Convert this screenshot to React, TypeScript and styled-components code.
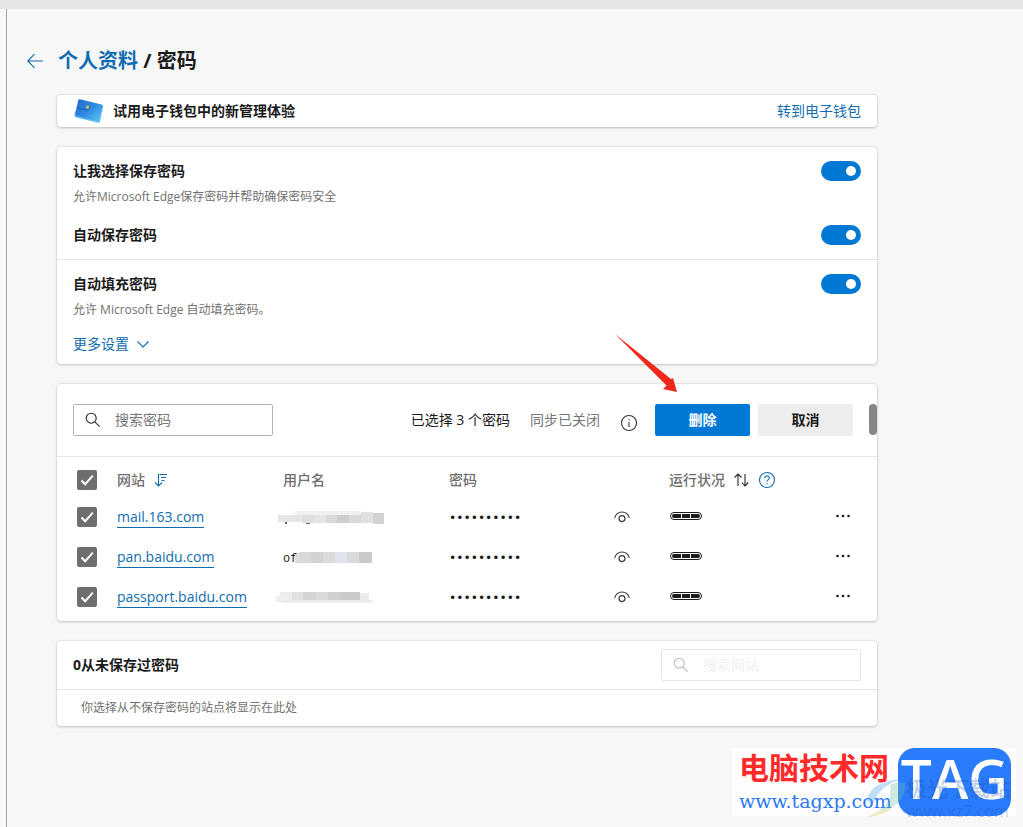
import React from 'react';
import styled, { createGlobalStyle } from 'styled-components';

const GlobalStyle = createGlobalStyle`
  * { box-sizing: border-box; }
  body {
    margin: 0;
    background: #f7f7f7;
    color: #1b1b1b;
    font-family: 'Open Sans', 'Noto Sans CJK SC', sans-serif;
    font-size: 14px;
    line-height: 20px;
  }
  button, input { font: inherit; color: inherit; }
  button { border: 0; padding: 0; background: none; }
  svg { display: block; flex: none; }
`;

const Page = styled.div`
  position: relative;
  display: flex;
  flex-direction: column;
  min-height: 100vh;
  overflow: hidden;
`;

const TopStrip = styled.div`
  height: 9px;
  background: #e5e5e5;
`;

const Main = styled.main`
  flex: 1;
  margin-left: 6px;
  padding: 38px 20px 38px;
  border-left: 1px solid #a6a6a6;
`;

const Header = styled.header`
  display: flex;
  align-items: center;
  gap: 14px;
  margin-bottom: 20px;
`;

const Title = styled.h1`
  margin: 0;
  font-size: 20px;
  line-height: 28px;
  font-weight: 700;
`;

const Link = styled.a`
  color: #0f6cb0;
  text-decoration: none;
`;

const Cards = styled.div`
  display: flex;
  flex-direction: column;
  gap: 20px;
  max-width: 850px;
  padding-left: 30px;
`;

const Card = styled.section`
  position: relative;
  background: #fff;
  border-radius: 4px;
  box-shadow: 0 0 2px rgba(0, 0, 0, 0.18), 0 1px 3px rgba(0, 0, 0, 0.18);
`;

const Banner = styled.div`
  display: flex;
  align-items: center;
  gap: 8px;
  height: 32px;
  padding: 0 16px;
`;

const Strong = styled.h2`
  flex: 1;
  margin: 0;
  font-size: 14px;
  line-height: 20px;
  font-weight: 700;
`;

const SettingGroup = styled.div<{ $divided?: boolean; $end: number }>`
  padding: 14px 16px ${(p) => p.$end}px;
  border-top: ${(p) => (p.$divided ? '1px solid #e5e5e5' : '0')};
`;

const SettingRow = styled.label`
  display: flex;
  align-items: center;
  font-weight: 700;

  & > span { flex: 1; }
`;

const Note = styled.p`
  margin: 6px 0 0;
  font-size: 12px;
  line-height: 20px;
  color: #717171;
`;

const Toggle = styled.input`
  appearance: none;
  display: flex;
  align-items: center;
  justify-content: flex-end;
  width: 40px;
  height: 20px;
  margin: 0;
  padding: 0 5px;
  border-radius: 10px;
  background: #0078d4;

  &::before {
    content: '';
    width: 10px;
    height: 10px;
    border-radius: 50%;
    background: #fff;
  }
`;

const MoreButton = styled.button`
  display: flex;
  align-items: center;
  gap: 8px;
  margin-top: 14px;
  color: #0f6cb0;
`;

const SecondSetting = styled.div`
  padding-top: 18px;
`;

const Toolbar = styled.div`
  display: flex;
  align-items: center;
  height: 73px;
  padding: 0 24px 0 16px;
  border-bottom: 1px solid #e5e5e5;
`;

const SearchBox = styled.label<{ $muted?: boolean }>`
  display: flex;
  align-items: center;
  gap: 14px;
  width: 200px;
  height: 32px;
  padding: 0 11px;
  border: 1px solid ${(p) => (p.$muted ? '#e5e5e5' : '#b3b3b3')};
  border-radius: 2px;
  color: ${(p) => (p.$muted ? '#b8b8b8' : '#2b2b2b')};

  input {
    flex: 1;
    min-width: 0;
    padding: 0;
    border: 0;
    outline: 0;
    background: none;
  }
  input::placeholder {
    color: ${(p) => (p.$muted ? '#f0f0f0' : '#767676')};
    opacity: 1;
  }
`;

const Status = styled.div`
  display: flex;
  align-items: center;
  gap: 20px;
  margin: 0 17px 0 auto;
`;

const Muted = styled.span`
  color: #767676;
`;

const InfoButton = styled.button`
  padding-top: 6px;
`;

const ActionButton = styled.button<{ $primary?: boolean }>`
  width: 95px;
  height: 32px;
  margin-left: ${(p) => (p.$primary ? 0 : 8)}px;
  border-radius: 2px;
  font-weight: 700;
  background: ${(p) => (p.$primary ? '#0078d4' : '#ededed')};
  color: ${(p) => (p.$primary ? '#fff' : '#1b1b1b')};
`;

const ScrollThumb = styled.div`
  position: absolute;
  top: 20px;
  right: 0;
  width: 8px;
  height: 31px;
  border-radius: 4px;
  background: #868686;
`;

const TableWrap = styled.div`
  padding-bottom: 4px;
`;

const Table = styled.table`
  width: 100%;
  table-layout: fixed;
  border-collapse: collapse;

  th, td {
    height: 40px;
    padding: 0;
    text-align: left;
    vertical-align: middle;
  }
  th {
    padding-top: 6px;
    font-weight: 500;
    color: #6e6e6e;
  }
  td:nth-child(n + 6) { padding-bottom: 2px; }
`;

const HeadLabel = styled.span`
  display: flex;
  align-items: center;
  gap: 9px;
`;

const CheckLabel = styled.label`
  display: grid;
  width: 20px;
  height: 20px;
  margin-left: 20px;

  & > * { grid-area: 1 / 1; }
  input {
    appearance: none;
    width: 20px;
    height: 20px;
    margin: 0;
    border-radius: 2px;
    background: #6e6e6e;
  }
  svg { z-index: 1; pointer-events: none; }
`;

const SiteLink = styled.a`
  display: inline-block;
  border-bottom: 1px solid #0f6cb0;
  color: #0f6cb0;
  text-decoration: none;
`;

const UserCell = styled.div`
  display: flex;
  align-items: center;
  height: 20px;
  font-family: 'Liberation Mono', monospace;
  font-size: 12px;

  span { padding-top: 4px; }
`;

const Mosaic = styled.svg`
  margin-left: -10px;
`;

const Dots = styled.span`
  font-family: 'DejaVu Sans Mono', monospace;
  font-size: 12px;
`;

const IconButton = styled.button<{ $indent: number }>`
  display: block;
  margin-left: ${(p) => p.$indent}px;
`;

const BlockedHead = styled.div`
  display: flex;
  align-items: center;
  height: 49px;
  padding: 0 16px;
  border-bottom: 1px solid #e5e5e5;
`;

const BlockedNote = styled.p`
  margin: 0;
  padding: 9px 24px;
  font-size: 12px;
  line-height: 18px;
  color: #717171;
`;

const ArrowMark = styled.svg`
  position: absolute;
  left: 614px;
  top: 333px;
`;

const Watermark = styled.div`
  position: absolute;
  right: 7px;
  bottom: 11px;
  display: flex;
  justify-content: space-between;
  width: 284px;
  height: 68px;
  padding: 0 5px 0 7px;
  background: #fdfdfd;
`;

const BrandName = styled.div`
  padding-top: 3px;
  font-size: 30px;
  line-height: 34px;
  font-weight: 700;
  color: #ff2a2a;
`;

const BrandUrl = styled.div`
  font-family: 'DejaVu Serif', serif;
  font-size: 19px;
  line-height: 32px;
  color: #2b78f5;
`;

const BrandTag = styled.div`
  width: 113px;
  height: 68px;
  border-radius: 17px;
  background: #2b7bfd;
  color: #fff;
  font-size: 55px;
  line-height: 60px;
  font-weight: 600;
  text-align: center;
`;

const GhostMark = styled.div`
  position: absolute;
  left: 174px;
  top: 27px;
  color: rgba(20, 80, 160, 0.26);
  white-space: nowrap;

  div:first-child { font-size: 21px; line-height: 26px; font-weight: 700; }
  div:last-child { font-size: 16px; line-height: 20px; }
`;

const Swoosh = styled.svg`
  position: absolute;
  left: 134px;
  top: 28px;
`;

type Tile = [x: number, y: number, w: number, h: number, fill: string];

const rows: { site: string; user: string; tiles: Tile[] }[] = [
  {
    site: 'mail.163.com',
    user: '',
    tiles: [
      [5, 8, 24, 7, '#e6e6e6'], [12, 15, 2, 2, '#666'], [29, 6, 12, 10, '#dedede'],
      [33, 16, 4, 1, '#666'], [22, 4, 66, 4, '#f0f0f0'], [41, 8, 12, 8, '#e4e4e4'],
      [53, 8, 11, 8, '#d8d8d8'], [64, 8, 12, 8, '#cbcdce'], [76, 8, 12, 8, '#dadada'],
      [88, 5, 12, 11, '#dfe1e2'], [100, 6, 11, 11, '#d3d3d3'],
    ],
  },
  {
    site: 'pan.baidu.com',
    user: 'off',
    tiles: [
      [0, 7, 6, 9, '#dedede'], [4, 5, 12, 11, '#d9d9d9'], [16, 5, 12, 11, '#d2d2d2'],
      [28, 5, 12, 11, '#dadada'], [40, 5, 12, 11, '#e1e4ec'], [52, 5, 12, 11, '#d9d9d9'],
      [64, 5, 13, 11, '#c8cbcd'],
    ],
  },
  {
    site: 'passport.baidu.com',
    user: '',
    tiles: [
      [7, 5, 12, 10, '#ececec'], [3, 9, 12, 6, '#eeeeee'], [19, 5, 11, 8, '#e0e0e0'],
      [30, 5, 13, 8, '#d4d4d4'], [43, 5, 12, 8, '#dadada'], [55, 5, 12, 8, '#cfcfcf'],
      [67, 5, 20, 8, '#cacaca'], [87, 6, 9, 7, '#ebebeb'], [9, 13, 90, 3, '#ececec'],
    ],
  },
];

const CheckMark = () => (
  <svg width="20" height="20" viewBox="0 0 20 20" fill="none" stroke="#fff" strokeWidth="2">
    <path d="M4.5 10.5l3.7 3.7L15.8 5.6" />
  </svg>
);

const Check = ({ name }: { name: string }) => (
  <CheckLabel>
    <input type="checkbox" defaultChecked aria-label={name} />
    <CheckMark />
  </CheckLabel>
);

const SearchIcon = () => (
  <svg width="16" height="16" viewBox="0 0 16 16" fill="none" stroke="currentColor" strokeWidth="1.1">
    <circle cx="6.2" cy="6.2" r="5" />
    <path d="M9.8 9.8l4.8 4.8" />
  </svg>
);

const WalletIcon = () => (
  <svg width="32" height="26" viewBox="0 0 32 26">
    <defs>
      <linearGradient id="wallet" x1="0" y1="0" x2="1" y2="1">
        <stop offset="0" stopColor="#2467c9" />
        <stop offset="0.5" stopColor="#2f8be3" />
        <stop offset="1" stopColor="#62d0f2" />
      </linearGradient>
    </defs>
    <path d="M2 13L1.500 17.500Q1.500 19 3 19.500L25 24.800Q26.500 25 27 23.500L27.500 20Z" fill="#63bdf0" />
    <path d="M5.200 2.200Q5.700 1 7 1.300L28.500 6.500Q30.300 7 30 8.500L27 22.500Q26.600 24 25 23.600L3.500 18Q2 17.500 2.300 16Z" fill="url(#wallet)" />
    <path d="M3.500 10L13 12Q16 12.300 17.500 9.500" fill="none" stroke="#1c55b5" strokeWidth="0.9" />
    <path d="M13.200 7l3 .8l-.5 3.200l-2.800-.7z" fill="#82b66d" />
    <circle cx="14.500" cy="9.500" r="0.900" fill="#e7d36b" />
  </svg>
);

const EyeIcon = () => (
  <svg width="16" height="12" viewBox="0 0 16 12" fill="none" stroke="#333" strokeWidth="1.1">
    <path d="M0.600 7.200C1.600 3.200 4.500 1 8 1s6.400 2.200 7.400 6.200" />
    <circle cx="8" cy="7.600" r="3" />
  </svg>
);

const HealthIcon = () => (
  <svg width="34" height="8" viewBox="-1 0 34 8" role="img" aria-label="强">
    <rect x="0.500" y="0.500" width="31" height="7" rx="3.500" fill="#fff" stroke="#1b1b1b" />
    <path d="M4 2H11V6H4A2 2 0 0 1 4 2ZM12 2H20V6H12ZM21 2H28A2 2 0 0 1 28 6H21Z" fill="#1b1b1b" />
  </svg>
);

const Setting = ({ name }: { name: string }) => (
  <SettingRow>
    <span>{name}</span>
    <Toggle type="checkbox" role="switch" defaultChecked />
  </SettingRow>
);

export default function App() {
  return (
    <Page>
      <GlobalStyle />
      <TopStrip />
      <Main>
        <Header>
          <button aria-label="返回">
            <svg width="17" height="16" viewBox="0 0 17 16" fill="none" stroke="#0f6cb0" strokeWidth="1.1">
              <path d="M16 8H0.800M7.500 1.200L0.800 8l6.700 6.800" />
            </svg>
          </button>
          <Title><Link href="#profile">个人资料</Link> / 密码</Title>
        </Header>

        <Cards>
          <Card>
            <Banner>
              <WalletIcon />
              <Strong>试用电子钱包中的新管理体验</Strong>
              <Link href="#wallet">转到电子钱包</Link>
            </Banner>
          </Card>

          <Card>
            <SettingGroup $end={14}>
              <Setting name="让我选择保存密码" />
              <Note>允许Microsoft Edge保存密码并帮助确保密码安全</Note>
              <SecondSetting><Setting name="自动保存密码" /></SecondSetting>
            </SettingGroup>
            <SettingGroup $divided $end={10}>
              <Setting name="自动填充密码" />
              <Note>允许 Microsoft Edge 自动填充密码。</Note>
              <MoreButton>
                更多设置
                <svg width="12" height="8" viewBox="0 0 12 8" fill="none" stroke="#0f6cb0" strokeWidth="1.1">
                  <path d="M0.500 1.500L6 7l5.500-5.500" />
                </svg>
              </MoreButton>
            </SettingGroup>
          </Card>

          <Card>
            <Toolbar>
              <SearchBox>
                <SearchIcon />
                <input type="text" placeholder="搜索密码" aria-label="搜索密码" />
              </SearchBox>
              <Status>
                <span>已选择 3 个密码</span>
                <Muted>同步已关闭</Muted>
                <InfoButton aria-label="信息">
                  <svg width="18" height="18" viewBox="0 0 18 18" fill="none" stroke="#333" strokeWidth="1.1">
                    <circle cx="9" cy="9" r="7.500" />
                    <path d="M9 8v5M9 5.200v1.400" />
                  </svg>
                </InfoButton>
              </Status>
              <ActionButton $primary>删除</ActionButton>
              <ActionButton>取消</ActionButton>
            </Toolbar>
            <ScrollThumb />
            <TableWrap>
              <Table>
                <colgroup>
                  <col style={{ width: 60 }} />
                  <col style={{ width: 166 }} />
                  <col style={{ width: 166 }} />
                  <col style={{ width: 145 }} />
                  <col style={{ width: 75 }} />
                  <col />
                  <col style={{ width: 58 }} />
                </colgroup>
                <thead>
                  <tr>
                    <th><Check name="全选" /></th>
                    <th>
                      <HeadLabel>
                        网站
                        <svg width="14" height="14" viewBox="0 0 14 14" fill="none" stroke="#0f6cb0" strokeWidth="1.100">
                          <path d="M4.500 1v12M1 9.500L4.500 13L8 9.500M5.500 1.500H13M7 4.500H12M7.500 7.500H10.500" />
                        </svg>
                      </HeadLabel>
                    </th>
                    <th>用户名</th>
                    <th>密码</th>
                    <th />
                    <th>
                      <HeadLabel>
                        运行状况
                        <svg width="15" height="14" viewBox="0 0 15 14" fill="none" stroke="#2b2b2b" strokeWidth="1.100">
                          <path d="M4 13V1M0.500 4.500L4 1L7.500 4.500M11 1v12M7.800 9.500l3.200 3.500L14.300 9.500" />
                        </svg>
                        <svg width="18" height="18" viewBox="0 0 18 18" fill="none" stroke="#0f6cb0" strokeWidth="1.100">
                          <circle cx="9" cy="9" r="7.500" />
                          <path d="M6.700 7.200C6.700 4.200 11.300 4.200 11.300 7C11.300 8.700 9 8.700 9 10.800M9 12v1.300" />
                        </svg>
                      </HeadLabel>
                    </th>
                    <th />
                  </tr>
                </thead>
                <tbody>
                  {rows.map((row) => (
                    <tr key={row.site}>
                      <td><Check name={row.site} /></td>
                      <td><SiteLink href={`#${row.site}`}>{row.site}</SiteLink></td>
                      <td>
                        <UserCell>
                          <span>{row.user}</span>
                          <Mosaic width="112" height="20" viewBox="0 0 112 20">
                            {row.tiles.map(([x, y, w, h, fill]) => (
                              <rect key={`${x}-${y}`} x={x} y={y} width={w} height={h} fill={fill} />
                            ))}
                          </Mosaic>
                        </UserCell>
                      </td>
                      <td><Dots>••••••••••</Dots></td>
                      <td><IconButton $indent={20} aria-label="显示密码"><EyeIcon /></IconButton></td>
                      <td><HealthIcon /></td>
                      <td>
                        <IconButton $indent={16} aria-label="更多操作">
                          <svg width="16" height="4" viewBox="0 0 16 4" fill="#1b1b1b">
                            <circle cx="2.500" cy="2" r="1.300" />
                            <circle cx="8" cy="2" r="1.300" />
                            <circle cx="13.500" cy="2" r="1.300" />
                          </svg>
                        </IconButton>
                      </td>
                    </tr>
                  ))}
                </tbody>
              </Table>
            </TableWrap>
          </Card>

          <Card>
            <BlockedHead>
              <Strong>0从未保存过密码</Strong>
              <SearchBox $muted>
                <SearchIcon />
                <input type="text" placeholder="搜索网站" aria-label="搜索网站" />
              </SearchBox>
            </BlockedHead>
            <BlockedNote>你选择从不保存密码的站点将显示在此处</BlockedNote>
          </Card>
        </Cards>
      </Main>

      <ArrowMark width="66" height="62" viewBox="0 0 66 62">
        <path d="M1 1L57 46L59 45L63 59L49 56L52.500 52.500Z" fill="#f0281a" />
      </ArrowMark>

      <Watermark>
        <div>
          <BrandName>电脑技术网</BrandName>
          <BrandUrl>www.tagxp.com</BrandUrl>
        </div>
        <BrandTag>TAG</BrandTag>
        <Swoosh width="40" height="44" viewBox="0 0 40 44">
          <path d="M1 24Q5 5 36 3Q15 9 9 24Q6 31 1 24Z" fill="#4da6e8" opacity="0.350" />
          <path d="M13 34Q27 25 24 9Q32 5 39 7Q40 24 25 32Q19 35 13 34Z" fill="#6cc09b" opacity="0.300" />
          <path d="M1 41Q14 33 26 33Q14 40 1 41Z" fill="#e0d98a" opacity="0.500" />
        </Swoosh>
        <GhostMark>
          <div>极光下载站</div>
          <div>www.xz7.com</div>
        </GhostMark>
      </Watermark>
    </Page>
  );
}
